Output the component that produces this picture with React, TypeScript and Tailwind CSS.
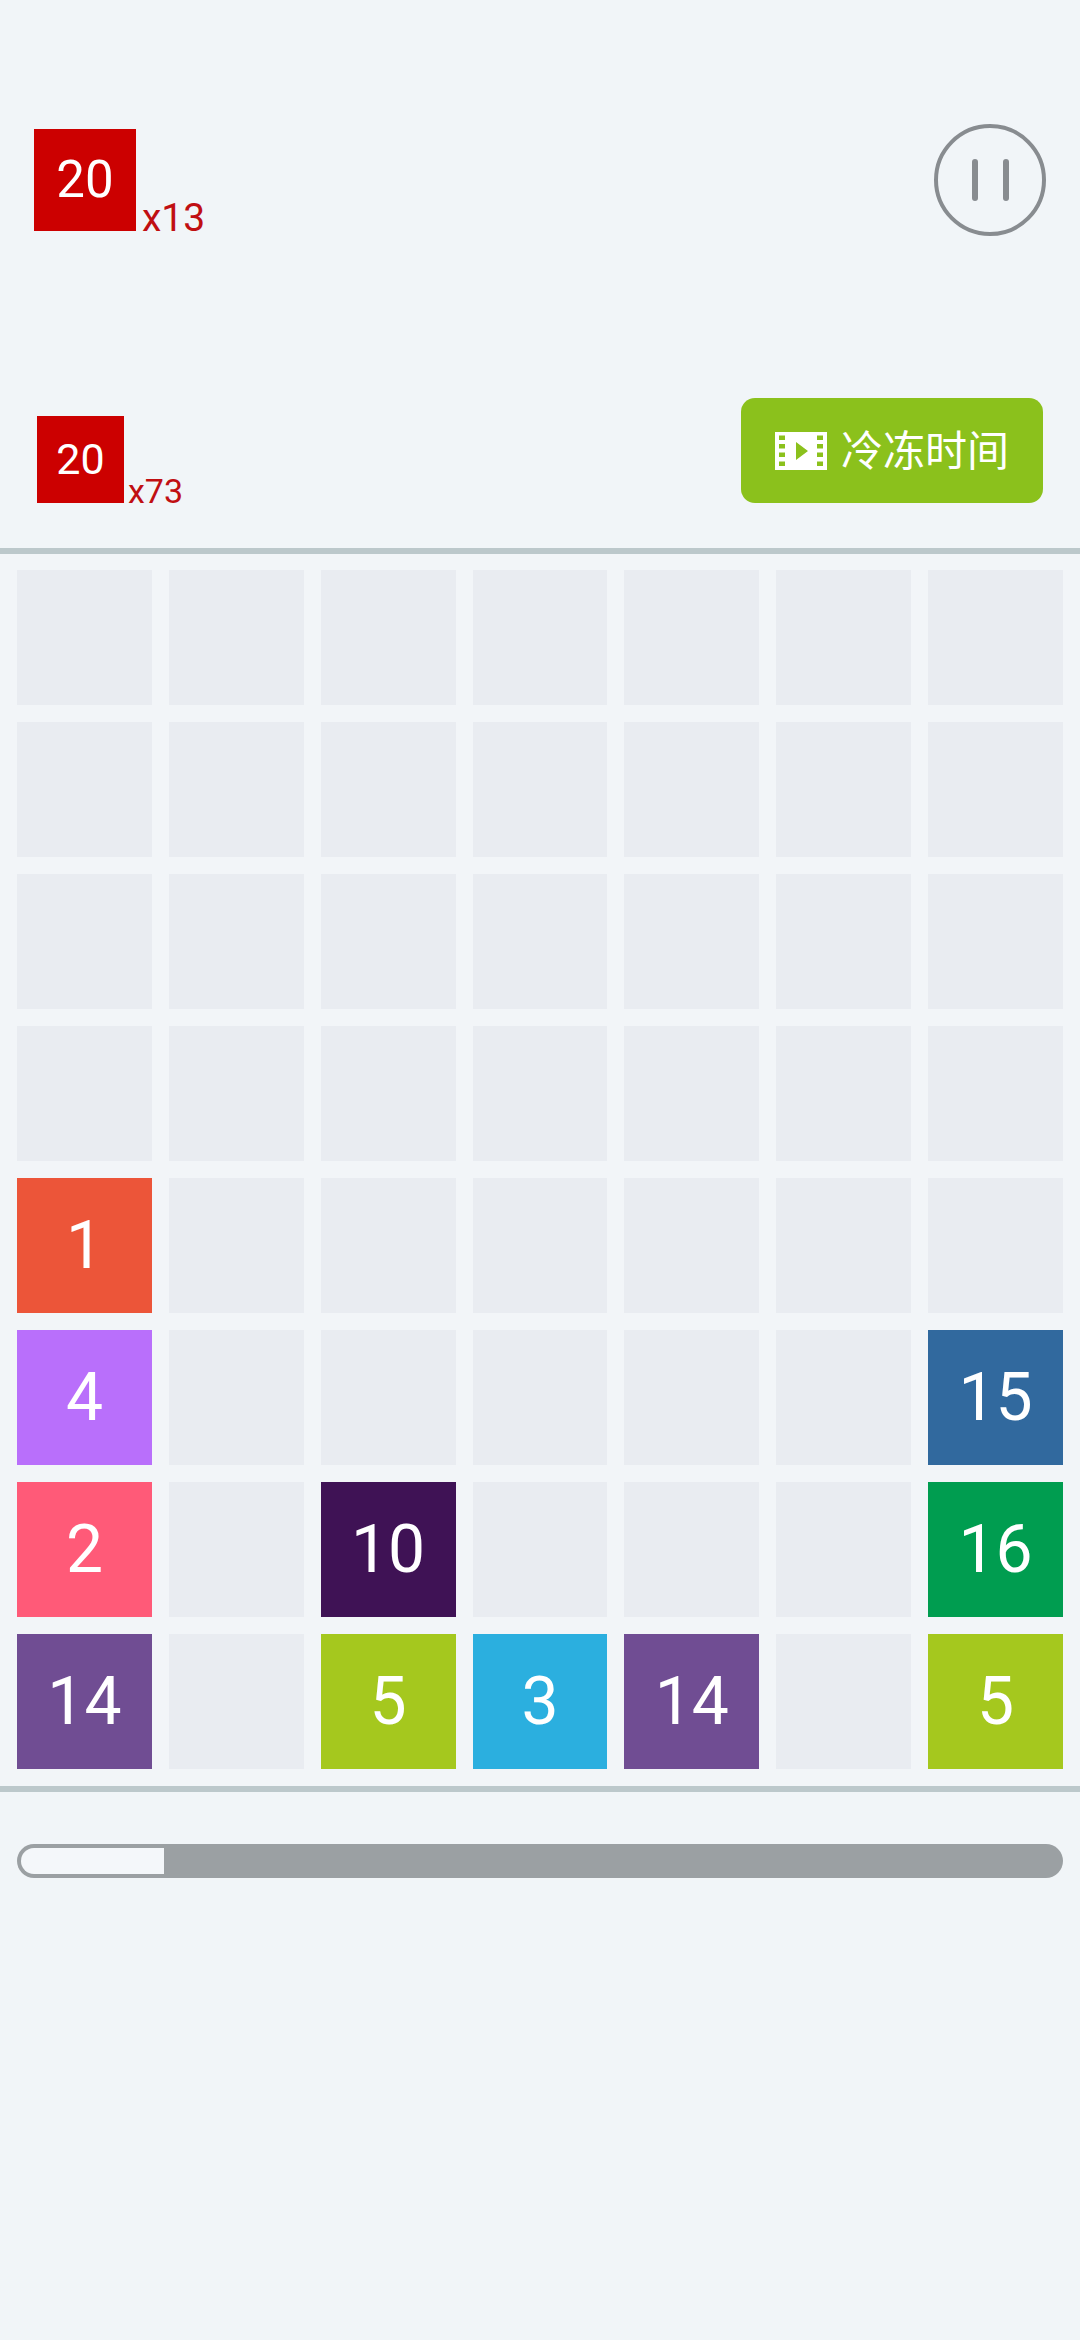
const ROBOTO = "font-['Roboto',sans-serif]";

type Tile = { n: number; color: string } | null;

const one = { n: 1, color: "bg-[#ec5539]" };
const two = { n: 2, color: "bg-[#ff5a78]" };
const three = { n: 3, color: "bg-[#2bafdf]" };
const four = { n: 4, color: "bg-[#b96ffb]" };
const five = { n: 5, color: "bg-[#a5c81e]" };
const ten = { n: 10, color: "bg-[#3f1255]" };
const fourteen = { n: 14, color: "bg-[#704d93]" };
const fifteen = { n: 15, color: "bg-[#31699e]" };
const sixteen = { n: 16, color: "bg-[#009d50]" };

const board: Tile[][] = [
  [null, null, null, null, null, null, null],
  [null, null, null, null, null, null, null],
  [null, null, null, null, null, null, null],
  [null, null, null, null, null, null, null],
  [one, null, null, null, null, null, null],
  [four, null, null, null, null, null, fifteen],
  [two, null, ten, null, null, null, sixteen],
  [fourteen, null, five, three, fourteen, null, five],
];

function FilmIcon() {
  return (
    <svg width="52" height="38" viewBox="0 0 52 38" className="shrink-0">
      <path
        fillRule="evenodd"
        fill="#ffffff"
        d="M0 0H52V38H0Z M4 3.5V8H10V3.5Z M4 12V16.5H10V12Z M4 20.5V25H10V20.5Z M4 29.5V34H10V29.5Z M42 3.5V8H48V3.5Z M42 12V16.5H48V12Z M42 20.5V25H48V20.5Z M42 29.5V34H48V29.5Z M21 10V28L33 19Z"
      />
    </svg>
  );
}

function PauseButton() {
  return (
    <div className="w-[112px] h-[112px] rounded-full border-4 border-[#888c90] flex items-center justify-center gap-[25px]">
      <span className="w-[6px] h-[42px] rounded-full bg-[#888c90]"></span>
      <span className="w-[6px] h-[42px] rounded-full bg-[#888c90]"></span>
    </div>
  );
}

export default function App() {
  return (
    <div className={`w-[1080px] h-[2340px] bg-[#f1f5f8] overflow-hidden ${ROBOTO}`}>
      <header className="h-[548px] flex flex-col">
        <div className="mt-[124px] pl-[34px] pr-[34px] flex flex-row items-center justify-between">
          <div className="flex flex-row items-end">
            <div className="w-[102px] h-[102px] bg-[#cc0000] text-white text-[51px] flex items-center justify-center">
              20
            </div>
            <span className="ml-[6px] mb-[-9px] text-[39px] leading-[44px] text-[#c00f12]">
              x13
            </span>
          </div>
          <PauseButton />
        </div>
        <div className="mt-[162px] pl-[37px] pr-[37px] flex flex-row items-end justify-between">
          <div className="flex flex-row items-end">
            <div className="w-[87px] h-[87px] bg-[#cc0000] text-white text-[43px] flex items-center justify-center">
              20
            </div>
            <span className="ml-[4px] mb-[-8px] text-[34px] leading-[40px] text-[#c00f12]">
              x73
            </span>
          </div>
          <button className="w-[302px] h-[105px] rounded-[14px] bg-[#8bc11c] text-white flex items-center justify-center gap-[14px]">
            <FilmIcon />
            <span className="text-[42px] leading-[50px] mb-[6px] font-['Noto_Sans_CJK_SC',sans-serif]">
              冷冻时间
            </span>
          </button>
        </div>
      </header>

      <main className="border-y-[6px] border-[#bcc8cb] bg-[#f2f5f8] px-[17px] pt-[16px] pb-[17px] grid grid-cols-7 gap-x-[17px] gap-y-[17px]">
        {board.flat().map((tile, i) => (
          <div
            key={i}
            className={`h-[135px] flex items-center justify-center text-white text-[66px] ${
              tile ? tile.color : "bg-[#e9ecf1]"
            }`}
          >
            {tile?.n}
          </div>
        ))}
      </main>

      <div className="mt-[52px] mx-[17px] h-[34px] rounded-full bg-[#9ba0a3] p-[4px]">
        <div className="w-[143px] h-[26px] rounded-l-full bg-[#f4f7fa]"></div>
      </div>
    </div>
  );
}
